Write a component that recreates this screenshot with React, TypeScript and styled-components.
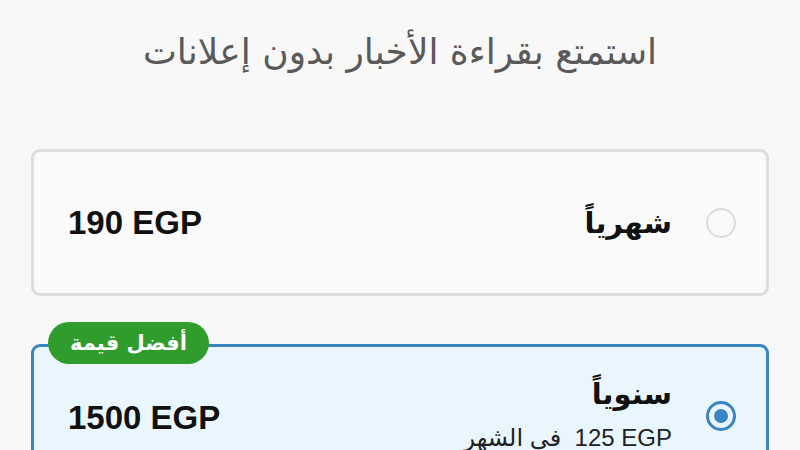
import React from 'react';
import styled, { createGlobalStyle } from 'styled-components';

const GlobalStyle = createGlobalStyle`
  html, body {
    margin: 0;
    padding: 0;
    background: #f8f8f8;
  }
  body {
    font-family: 'Liberation Sans', 'DejaVu Sans', sans-serif;
  }
`;

const Page = styled.div`
  direction: rtl;
  width: 800px;
  padding: 0 31px;
  box-sizing: border-box;
`;

const Title = styled.h1`
  margin: 0;
  padding-top: 26px;
  height: 149px;
  box-sizing: border-box;
  text-align: center;
  font-family: 'DejaVu Sans', 'Noto Sans', sans-serif;
  font-weight: 400;
  font-size: 36px;
  line-height: 52px;
  color: #5a5a5a;
`;

const Plans = styled.div`
  display: flex;
  flex-direction: column;
  gap: 48px;
`;

const Card = styled.div<{ $selected?: boolean }>`
  position: relative;
  display: flex;
  align-items: center;
  gap: 34px;
  height: 147px;
  box-sizing: border-box;
  padding: 0 30px 0 34px;
  border: 3px solid ${(p) => (p.$selected ? '#3a84c2' : '#dedede')};
  border-radius: 9px;
  background: ${(p) => (p.$selected ? '#eaf6fe' : '#fafafa')};
`;

const Radio = styled.span<{ $checked?: boolean }>`
  flex: none;
  width: 30px;
  height: 30px;
  margin-bottom: ${(p) => (p.$checked ? '4px' : '0')};
  box-sizing: border-box;
  border-radius: 50%;
  border: ${(p) => (p.$checked ? '3px solid #3a84c2' : '2px solid #dcdcdc')};
  display: flex;
  align-items: center;
  justify-content: center;

  &::after {
    content: '';
    display: ${(p) => (p.$checked ? 'block' : 'none')};
    width: 14px;
    height: 14px;
    border-radius: 50%;
    background: #3a84c2;
  }
`;

const Label = styled.div<{ $stacked?: boolean }>`
  display: flex;
  flex-direction: column;
  gap: 10px;
  padding-bottom: ${(p) => (p.$stacked ? '10px' : '0')};
`;

const PlanName = styled.div`
  font-family: 'DejaVu Sans', 'Noto Sans', sans-serif;
  font-weight: 700;
  font-size: 29px;
  line-height: 40px;
  color: #111;
`;

const PerMonth = styled.div`
  font-family: 'Liberation Sans', 'DejaVu Sans', sans-serif;
  font-size: 24px;
  line-height: 28px;
  color: #222;
  white-space: pre;
`;

const Amount = styled.span`
  direction: ltr;
  unicode-bidi: isolate;
`;

const Price = styled.div`
  margin-right: auto;
  direction: ltr;
  font-family: 'Liberation Sans', sans-serif;
  font-weight: 700;
  font-size: 33px;
  color: #111;
`;

const Badge = styled.div`
  position: absolute;
  top: -25px;
  left: 14px;
  height: 42px;
  padding: 0 22px;
  border-radius: 21px;
  background: #2f9c2b;
  color: #fff;
  display: flex;
  align-items: center;
  font-family: 'DejaVu Sans', 'Noto Sans', sans-serif;
  font-weight: 700;
  font-size: 21px;
`;

const App = () => (
  <>
    <GlobalStyle />
    <Page>
      <Title>استمتع بقراءة الأخبار بدون إعلانات</Title>
      <Plans>
        <Card>
          <Radio />
          <Label>
            <PlanName>شهرياً</PlanName>
          </Label>
          <Price>190 EGP</Price>
        </Card>
        <Card $selected>
          <Badge>أفضل قيمة</Badge>
          <Radio $checked />
          <Label $stacked>
            <PlanName>سنوياً</PlanName>
            <PerMonth>
              <Amount>125 EGP</Amount>{'  '}في الشهر
            </PerMonth>
          </Label>
          <Price>1500 EGP</Price>
        </Card>
      </Plans>
    </Page>
  </>
);

export default App;
